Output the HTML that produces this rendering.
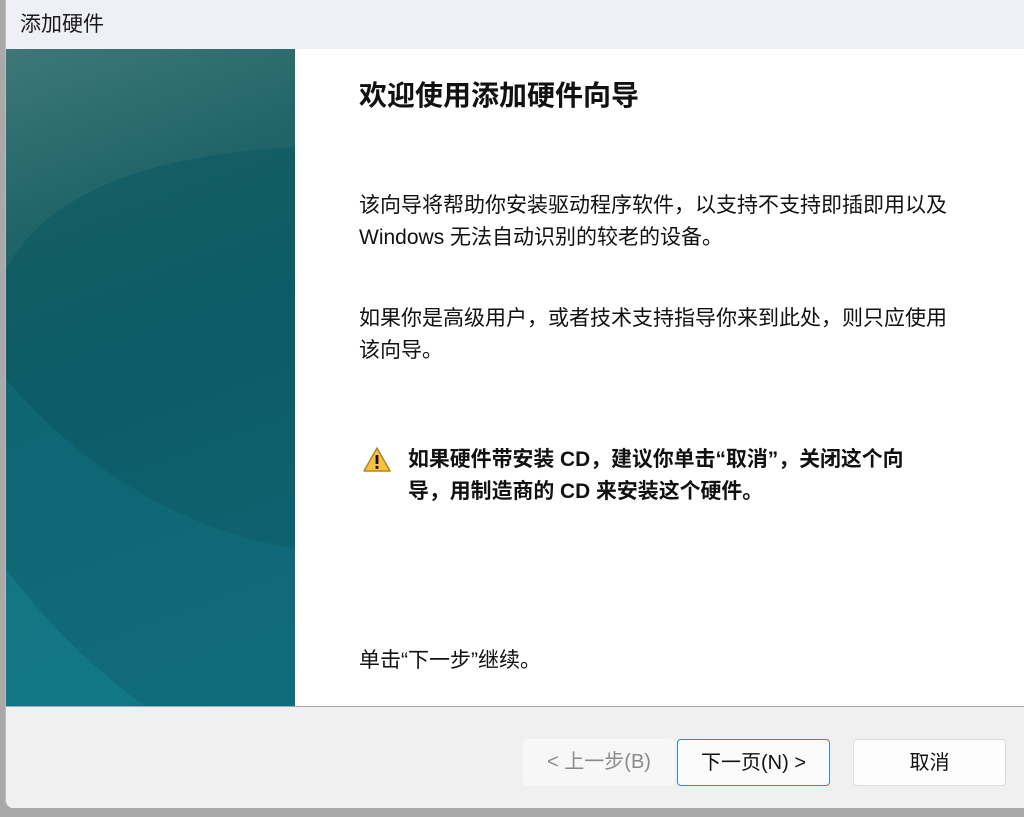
<!DOCTYPE html>
<html><head><meta charset="utf-8"><style>
*{margin:0;padding:0;box-sizing:border-box}
body{width:1024px;height:817px;background:#a9a9a9;font-family:"Liberation Sans","Noto Sans CJK SC",sans-serif;position:relative;overflow:hidden}
.win{position:absolute;left:5px;top:0;width:1030px;height:808px;background:#fff;border-radius:0 0 8px 8px;overflow:hidden;border-left:1px solid #bbb}
.title{position:absolute;left:0;top:0;width:100%;height:49px;background:#eff0f5;font-size:21px;color:#1a1a1a;padding:8px 0 0 14px}
.side{position:absolute;left:0;top:49px;width:289px;height:658px;overflow:hidden;background:linear-gradient(160deg,#3d7878 0%,#1f6468 25%,#0f5e6e 45%,#126c80 75%,#16788a 100%)}
.t{position:absolute;left:353px;color:#111;font-size:21px;line-height:32px;white-space:nowrap}
.foot{position:absolute;left:0;top:706px;width:100%;height:102px;background:#f0f0f0;border-top:1px solid #a8a8a8}
.btn{position:absolute;top:739px;height:47px;border-radius:4px;font-size:20px;text-align:center;line-height:46px}
</style></head><body>
<div class="win">
<div class="title">添加硬件</div>
<div class="side">
<svg width="289" height="658" style="position:absolute;left:0;top:0">
<path d="M0 220 Q60 110 289 98 L289 658 L0 658 Z" fill="#0c5a62" opacity="0.6"/>
<path d="M0 330 L0 658 L289 658 L289 500 Q120 470 0 330 Z" fill="#13788a" opacity="0.35"/>
<path d="M0 520 L0 658 L140 658 Q60 600 0 520 Z" fill="#18909a" opacity="0.35"/>
</svg>
</div>
<div class="t" style="top:80px;font-size:28px;font-weight:bold">欢迎使用添加硬件向导</div>
<div class="t" style="top:190px">该向导将帮助你安装驱动程序软件，以支持不支持即插即用以及<br>Windows 无法自动识别的较老的设备。</div>
<div class="t" style="top:303px">如果你是高级用户，或者技术支持指导你来到此处，则只应使用<br>该向导。</div>
<svg style="position:absolute;left:356px;top:446px" width="30" height="28" viewBox="0 0 30 28"><path d="M15 2 L28 25 L2 25 Z" fill="#f5c242" stroke="#b8861a" stroke-width="1.5" stroke-linejoin="round"/><rect x="13.6" y="9" width="2.8" height="9" fill="#111"/><rect x="13.6" y="20" width="2.8" height="2.8" fill="#111"/></svg>
<div class="t" style="top:444px;left:402px;font-weight:bold;font-size:20.9px">如果硬件带安装 CD，建议你单击“取消”，关闭这个向<br>导，用制造商的 CD 来安装这个硬件。</div>
<div class="t" style="top:645px">单击“下一步”继续。</div>
<div class="foot"></div>
</div>
<div class="btn" style="left:523px;width:152px;background:#f7f7f7;color:#8a8a8a">&lt; 上一步(B)</div>
<div class="btn" style="left:677px;width:153px;background:#fbfbfb;border:1px solid #3a85d4;color:#111">下一页(N) &gt;</div>
<div class="btn" style="left:853px;width:153px;background:#fdfdfd;border:1px solid #ddd;color:#111">取消</div>
</body></html>
